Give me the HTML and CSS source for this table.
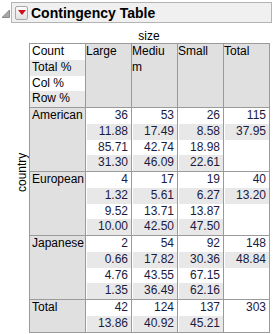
FILE: index.html
```html
<!DOCTYPE html>
<html>
  <head>
    <meta charset="UTF-8" />
    <title>Contingency Table</title>
    <link rel="stylesheet" href="styles.css">
  </head>
  <body>
    <div class="report">
      <div class="header">
        <svg class="twisty" width="8" height="8" viewBox="0 0 8 8"><polygon points="7.5,0 7.5,7.5 0,7.5" fill="#a8a8a8" stroke="#7a7a7a" stroke-width="0.8" /></svg>
        <div class="titlebar">
          <span class="menuBtn">
            <svg width="8" height="5" viewBox="0 0 8 5"><polygon points="0,0 8,0 4,5" fill="#d0101a" /></svg>
          </span>
          <span class="title">Contingency Table</span>
        </div>
      </div>

      <div class="colLabel">size</div>
      <div class="grid">
        <div class="rowLabel"><span>country</span></div>
        <table class="ct">
          <colgroup>
            <col class="labCol" />
            <col class="numCol" />
            <col class="numCol" />
            <col class="numCol" />
            <col class="numCol" />
          </colgroup>
          <tr>
            <td class="key">
              <div class="ln">Count</div>
              <div class="ln alt">Total %</div>
              <div class="ln">Col %</div>
              <div class="ln alt">Row %</div>
            </td>
            <td class="hd">Large</td>
            <td class="hd"><div class="narrow">Medium</div></td>
            <td class="hd">Small</td>
            <td class="hd">Total</td>
          </tr>
          <tr>
            <td class="lab">American</td>
            <td class="num"><div class="ln">36</div><div class="ln alt">11.88</div><div class="ln">85.71</div><div class="ln alt">31.30</div></td>
            <td class="num"><div class="ln">53</div><div class="ln alt">17.49</div><div class="ln">42.74</div><div class="ln alt">46.09</div></td>
            <td class="num"><div class="ln">26</div><div class="ln alt">8.58</div><div class="ln">18.98</div><div class="ln alt">22.61</div></td>
            <td class="num"><div class="ln">115</div><div class="ln alt">37.95</div></td>
          </tr>
          <tr>
            <td class="lab">European</td>
            <td class="num"><div class="ln">4</div><div class="ln alt">1.32</div><div class="ln">9.52</div><div class="ln alt">10.00</div></td>
            <td class="num"><div class="ln">17</div><div class="ln alt">5.61</div><div class="ln">13.71</div><div class="ln alt">42.50</div></td>
            <td class="num"><div class="ln">19</div><div class="ln alt">6.27</div><div class="ln">13.87</div><div class="ln alt">47.50</div></td>
            <td class="num"><div class="ln">40</div><div class="ln alt">13.20</div></td>
          </tr>
          <tr>
            <td class="lab">Japanese</td>
            <td class="num"><div class="ln">2</div><div class="ln alt">0.66</div><div class="ln">4.76</div><div class="ln alt">1.35</div></td>
            <td class="num"><div class="ln">54</div><div class="ln alt">17.82</div><div class="ln">43.55</div><div class="ln alt">36.49</div></td>
            <td class="num"><div class="ln">92</div><div class="ln alt">30.36</div><div class="ln">67.15</div><div class="ln alt">62.16</div></td>
            <td class="num"><div class="ln">148</div><div class="ln alt">48.84</div></td>
          </tr>
          <tr>
            <td class="lab">Total</td>
            <td class="num"><div class="ln">42</div><div class="ln alt">13.86</div></td>
            <td class="num"><div class="ln">124</div><div class="ln alt">40.92</div></td>
            <td class="num"><div class="ln">137</div><div class="ln alt">45.21</div></td>
            <td class="num"><div class="ln">303</div></td>
          </tr>
        </table>
      </div>
    </div>
  </body>
</html>
```

FILE: styles.css
```css
* {
  margin: 0;
  padding: 0;
  box-sizing: border-box;
}
body {
  background-color: #fff;
  font-family: "Liberation Sans", Arial, sans-serif;
  font-size: 12px;
  color: #000;
}
.report {
  width: 274px;
}
.header {
  display: grid;
  grid-template-columns: 11px 261px;
  padding-top: 2px;
}
.twisty {
  display: block;
  margin: 8px 0 0 2px;
}
.titlebar {
  height: 21px;
  display: flex;
  align-items: center;
  background-color: #f0f0f0;
  border: 1px solid #b4b4b4;
}
.menuBtn {
  flex: none;
  width: 13px;
  height: 14px;
  margin-left: 3px;
  display: flex;
  align-items: center;
  justify-content: center;
  border: 1px solid #a8a8a8;
  border-radius: 2px;
  background: linear-gradient(#fbfbfb, #e2e2e2);
}
.title {
  margin-left: 3px;
  font-size: 14px;
  font-weight: bold;
}
.colLabel {
  width: 269px;
  height: 20px;
  padding-top: 6px;
  padding-left: 29px;
  line-height: 14px;
  text-align: center;
}
.grid {
  display: flex;
}
.rowLabel {
  width: 29px;
  padding-top: 109px;
  display: flex;
  justify-content: flex-end;
  padding-right: 1px;
}
.rowLabel span {
  height: 40px;
  writing-mode: vertical-rl;
  transform: rotate(180deg);
  line-height: 12px;
}
.ct {
  border-collapse: collapse;
  table-layout: fixed;
  width: 241px;
}
.labCol {
  width: 56px;
}
.numCol {
  width: 46px;
}
.ct td {
  border: 1px solid #9a9a9a;
  padding: 0;
  vertical-align: top;
}
.ln {
  height: 15.75px;
  line-height: 15.75px;
  padding: 0 3px 0 2px;
  white-space: nowrap;
}
.ln.alt {
  background-color: #e8e8e8;
}
.num .ln {
  text-align: right;
  color: #1b1b3f;
  margin-left: 1px;
}
.hd,
.ct .lab {
  background-color: #e0e0e0;
  padding-left: 2px;
  line-height: 15.75px;
}
.narrow {
  width: 40px;
  word-break: break-all;
}
```
